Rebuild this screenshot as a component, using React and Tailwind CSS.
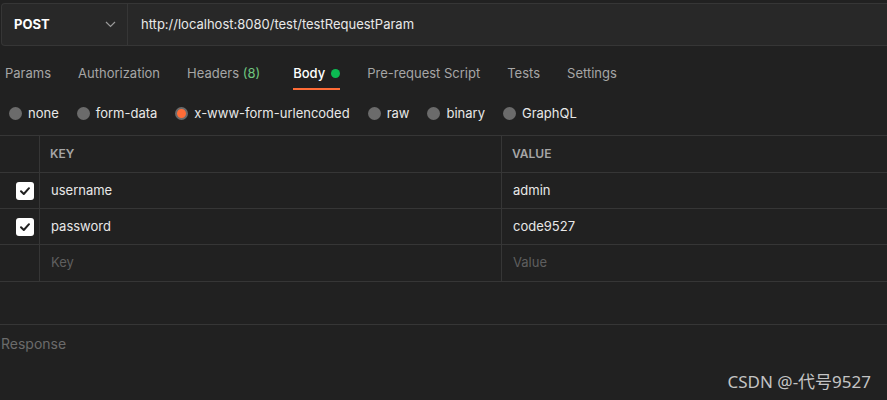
import React from "react";

const tabs = [
  { label: "Params" },
  { label: "Authorization" },
  { label: "Headers", count: "(8)" },
  { label: "Body", active: true },
  { label: "Pre-request Script" },
  { label: "Tests" },
  { label: "Settings" },
];

const bodyTypes = ["none", "form-data", "x-www-form-urlencoded", "raw", "binary", "GraphQL"];

const rows = [
  { key: "username", value: "admin" },
  { key: "password", value: "code9527" },
];

const Check = () => (
  <div className="w-[18px] h-[18px] rounded-[3px] bg-white flex items-center justify-center">
    <svg width="12" height="12" viewBox="0 0 12 12" fill="none">
      <path d="M2 6.2L4.8 9L10 3.2" stroke="#212121" strokeWidth="2" strokeLinecap="round" strokeLinejoin="round" />
    </svg>
  </div>
);

const App = () => {
  return (
    <div className="w-[887px] h-[400px] bg-[#212121] font-['Inter',sans-serif] relative overflow-hidden">

      {/* Request bar */}
      <div className="pt-[3px] pl-px">
        <div className="flex h-[43px] bg-[#282828] border border-[#363636] rounded-l-[4px] border-r-0">
          <div className="w-[126px] flex items-center justify-between pl-3 pr-[11px] border-r border-[#363636]">
            <span className="text-[13px] font-bold text-white">POST</span>
            <svg width="11" height="7" viewBox="0 0 11 7" fill="none">
              <path d="M1 1l4.5 4.5L10 1" stroke="#9a9a9a" strokeWidth="1.2" />
            </svg>
          </div>
          <div className="flex items-center pl-[13px] text-[13px] text-[#e8e8e8]">
            http://localhost:8080/test/testRequestParam
          </div>
        </div>
      </div>

      {/* Tabs */}
      <div className="flex h-[48px] pl-[5px] gap-[27px] text-[13px] leading-[16px] text-[#a6a6a6]">
        {tabs.map((t) => (
          <div
            key={t.label}
            className={t.active ? "relative h-full flex items-start pt-[19px] ml-[6px]" : "relative h-full flex items-start pt-[19px]"}
          >
            <span className={t.active ? "text-white font-medium" : ""}>
              {t.label}
              {t.count && <span className="text-[#6fc67f]"> {t.count}</span>}
            </span>
            {t.active && <span className="ml-[6px] mt-[4px] w-[9px] h-[9px] rounded-full bg-[#0cbb52]" />}
            {t.active && <span className="absolute left-0 right-0 bottom-[4px] h-[2px] bg-[#ff6c37]" />}
          </div>
        ))}
      </div>

      {/* Body types */}
      <div className="flex items-start h-[41px] pt-[11px] pl-[9px] gap-[18px] text-[13px] leading-[16px] text-[#e8e8e8]">
        {bodyTypes.map((b, i) => (
          <div key={b} className="flex items-center gap-[6px]">
            <span
              className={
                i === 2
                  ? "w-[13px] h-[13px] rounded-full bg-[#ff6c37] border-2 border-[#6b6b6b]"
                  : "w-[13px] h-[13px] rounded-full bg-[#6b6b6b]"
              }
            />
            <span>{b}</span>
          </div>
        ))}
      </div>

      {/* Table */}
      <div className="border-t border-[#363636] text-[13px]">
        <div className="flex h-[37px] border-b border-[#363636] font-semibold text-[#a6a6a6] text-[12px]">
          <div className="w-[40px] border-r border-[#363636]" />
          <div className="w-[462px] border-r border-[#363636] flex items-center pl-[10px]">KEY</div>
          <div className="flex-1 flex items-center pl-[10px]">VALUE</div>
        </div>
        {rows.map((r) => (
          <div key={r.key} className="flex h-[36px] border-b border-[#363636] text-[#e8e8e8]">
            <div className="w-[40px] border-r border-[#363636] flex items-center justify-end pr-[5px]">
              <Check />
            </div>
            <div className="w-[462px] border-r border-[#363636] flex items-center pl-[11px]">{r.key}</div>
            <div className="flex-1 flex items-center pl-[11px]">{r.value}</div>
          </div>
        ))}
        <div className="flex h-[37px] border-b border-[#363636] text-[#5f5f5f]">
          <div className="w-[40px] border-r border-[#363636]" />
          <div className="w-[462px] border-r border-[#363636] flex items-center pl-[11px]">Key</div>
          <div className="flex-1 flex items-center pl-[11px]">Value</div>
        </div>
      </div>

      {/* Response */}
      <div className="mt-[42px] border-t border-[#363636] pt-[8px] pl-px text-[14px] text-[#6b6b6b]">
        Response
      </div>

      <div className="absolute right-[16px] bottom-[6px] text-[17px] text-[#c4c4c4] font-['Noto_Sans','Noto_Sans_CJK_SC',sans-serif]">
        CSDN @-代号9527
      </div>
    </div>
  );
};

export default App;
